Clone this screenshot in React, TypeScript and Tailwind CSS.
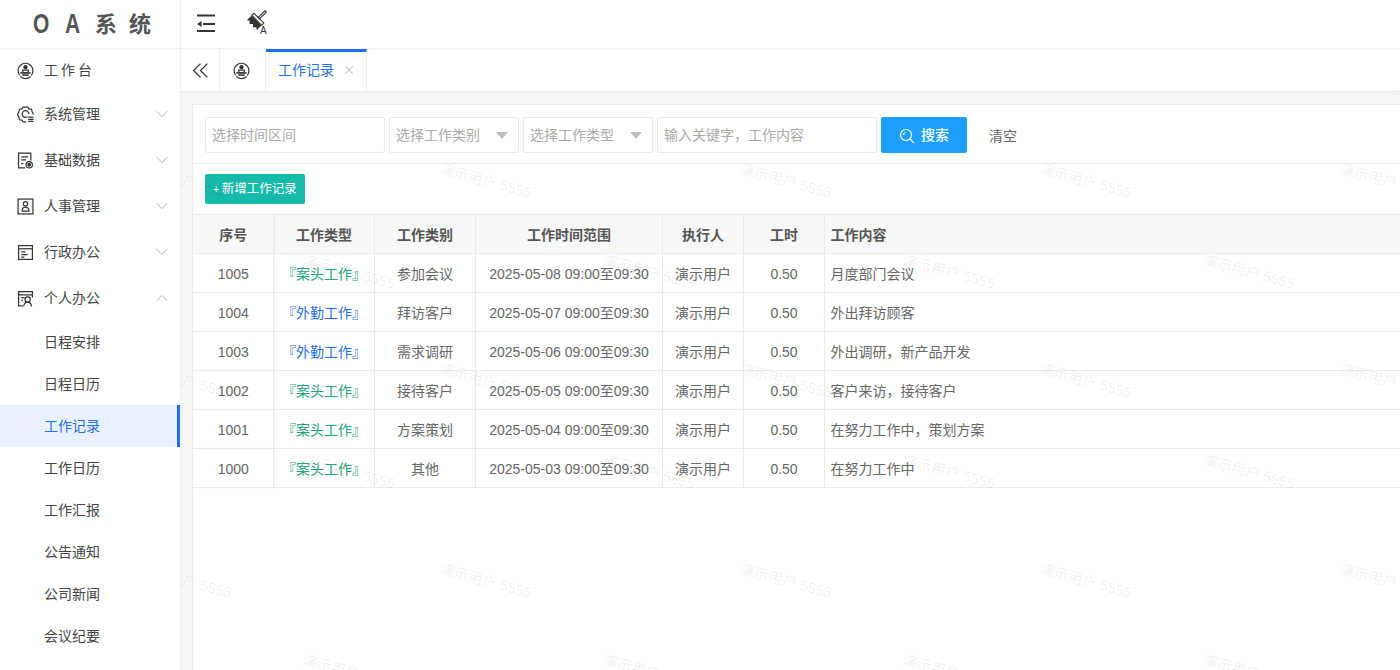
import { ChevronDown, ChevronUp, X } from 'lucide-react'
import type { ReactNode } from 'react'

const font = 'font-["Liberation_Sans","Noto_Sans_CJK_SC",sans-serif]'

// icons are 16x16 line drawings
const Ico = ({ children }: { children: ReactNode }) => (
  <svg viewBox="0 0 16 16" fill="none" stroke="#333" strokeWidth="1.15" className="w-[17px] h-[17px] shrink-0">
    {children}
  </svg>
)

const HomeIcon = () => (
  <Ico>
    <path d="M2.5 12.5A7 7 0 1 1 13.5 12.500" />
    <path d="M3 13.500A7 7 0 0 0 13 13.500" />
    <circle cx="8" cy="4.800" r="1.500" fill="#333" />
    <path d="M4.800 7.600h6.400M5.500 7.600v2.400h5V7.600" strokeWidth="1.200" />
    <path d="M3 10.300h10" strokeWidth="1.300" />
    <path d="M5 12.300h6" strokeWidth="1.500" />
  </Ico>
)

const SystemIcon = () => (
  <Ico>
    <path d="M8.500 15H5.800l-1-1.700-2.500-.3-.5-2.400L.4 8l1.400-2.600.5-2.400 2.500-.3L5.800 1h4.400l1 1.700 2.500.3.500 2.400L15.600 8" />
    <path d="M9.800 10.200A3.200 3.200 0 1 1 11.200 7.500" />
    <path d="M10.500 10.500h5M10.500 12.500h5M10.500 14.500h5" />
  </Ico>
)

const DataIcon = () => (
  <Ico>
    <path d="M7.500 15H1.500V1h11.500v7" />
    <path d="M4 4.500h6.500M4 7.500h4.500M4 11h2" />
    <circle cx="11.500" cy="12" r="3" />
    <circle cx="11.500" cy="12" r="1.200" fill="#333" />
  </Ico>
)

const PersonIcon = () => (
  <Ico>
    <rect x="1" y="1" width="14" height="14" />
    <circle cx="8" cy="5.500" r="2" />
    <path d="M4.800 12.300c0-2.500 1.300-3.800 3.200-3.800s3.200 1.300 3.200 3.800z" />
  </Ico>
)

const OfficeIcon = () => (
  <Ico>
    <rect x="1.500" y="1.500" width="13" height="13" />
    <path d="M1.500 4.500h13" />
    <path d="M4 7.500h4M4 10h6M4 12.300h3" />
  </Ico>
)

const MyIcon = () => (
  <Ico>
    <path d="M5.500 15H1.500V1.500h13V7" />
    <path d="M1.500 4.500h13M4 7.200h3M4 9.700h1.500" />
    <circle cx="10" cy="9" r="2.500" />
    <path d="M6.300 15.500c.3-2.500 1.800-4 3.700-4s3.400 1.500 3.700 4" />
  </Ico>
)

const menus = [
  { label: '系统管理', icon: <SystemIcon /> },
  { label: '基础数据', icon: <DataIcon /> },
  { label: '人事管理', icon: <PersonIcon /> },
  { label: '行政办公', icon: <OfficeIcon /> },
]

const subMenus = ['日程安排', '日程日历', '工作记录', '工作日历', '工作汇报', '公告通知', '公司新闻', '会议纪要']

const rows = [
  { id: 1005, type: '案头工作', cat: '参加会议', time: '2025-05-08 09:00至09:30', content: '月度部门会议' },
  { id: 1004, type: '外勤工作', cat: '拜访客户', time: '2025-05-07 09:00至09:30', content: '外出拜访顾客' },
  { id: 1003, type: '外勤工作', cat: '需求调研', time: '2025-05-06 09:00至09:30', content: '外出调研，新产品开发' },
  { id: 1002, type: '案头工作', cat: '接待客户', time: '2025-05-05 09:00至09:30', content: '客户来访，接待客户' },
  { id: 1001, type: '案头工作', cat: '方案策划', time: '2025-05-04 09:00至09:30', content: '在努力工作中，策划方案' },
  { id: 1000, type: '案头工作', cat: '其他', time: '2025-05-03 09:00至09:30', content: '在努力工作中' },
]

const heads = ['工作类型', '工作类别', '工作时间范围', '执行人', '工时']

// watermark spots, page coordinates
const marks = [
  ...[143, 443, 743, 1043, 1343].flatMap((x) => [159, 359, 559].map((y) => ({ x, y }))),
  ...[306, 606, 906, 1206].flatMap((x) => [250, 450, 650].map((y) => ({ x, y }))),
]

function Sidebar() {
  return (
    <aside className="w-[181px] shrink-0 border-r border-[#f0f0f0] bg-white overflow-hidden text-[14px] text-[#444]">
      <div className="h-[42px] flex items-center pl-[17px] gap-[10px]">
        <HomeIcon />
        <span className="tracking-[3px]">工作台</span>
      </div>
      {menus.map((m) => (
        <div key={m.label} className="h-[46px] flex items-center pl-[17px] pr-[8px] gap-[10px]">
          {m.icon}
          <span className="flex-1">{m.label}</span>
          <ChevronDown className="w-[20px] h-[20px] text-[#98a2b3]" strokeWidth={1} />
        </div>
      ))}
      <div className="h-[46px] flex items-center pl-[17px] pr-[8px] gap-[10px]">
        <MyIcon />
        <span className="flex-1">个人办公</span>
        <ChevronUp className="w-[20px] h-[20px] text-[#98a2b3]" strokeWidth={1} />
      </div>
      {subMenus.map((s) => (
        <div
          key={s}
          className={
            s === '工作记录'
              ? 'h-[42px] flex items-center pl-[44px] bg-[#e8f1fd] text-[#1f6fe5] border-r-[3px] border-[#1f6fe5]'
              : 'h-[42px] flex items-center pl-[44px]'
          }
        >
          {s}
        </div>
      ))}
    </aside>
  )
}

function TabBar() {
  return (
    <div className="h-[43px] shrink-0 flex bg-white border-b border-[#e8e8e8] shadow-[0_1px_3px_rgba(0,0,0,0.06)] relative">
      <div className="w-[39px] flex items-center justify-center border-r border-[#f0f0f0]">
        <svg viewBox="0 0 16 16" fill="none" stroke="#333" strokeWidth="1.2" className="w-[17px] h-[17px]">
          <path d="M8 1.500L1.500 8 8 14.500M14.500 1.500L8 8l6.500 6.500" />
        </svg>
      </div>
      <div className="w-[46px] flex items-center justify-center border-r border-[#f0f0f0] pr-[2px]">
        <HomeIcon />
      </div>
      <div className="w-[101px] border-t-[3px] border-t-[#1f6fe5] border-r border-r-[#f0f0f0] flex items-center pl-[12px] gap-[8px] text-[14px] text-[#1f6fe5] pb-[3px]">
        工作记录
        <X className="w-[14px] h-[14px] text-[#bbb]" strokeWidth={1.8} />
      </div>
    </div>
  )
}

function Caret() {
  return <span className="w-0 h-0 border-x-[6px] border-x-transparent border-t-[7px] border-t-[#bdbdbd]" />
}

function Filters() {
  const box = 'h-[36px] bg-white border border-[#ebebeb] rounded-[2px] flex items-center px-[6px] text-[14px] text-[#aaa]'
  return (
    <div className="h-[59px] flex items-center pl-[12px] pt-[2px] gap-[4px] border-b border-[#ebebeb]">
      <div className={`${box} w-[180px]`}>选择时间区间</div>
      <div className={`${box} w-[130px] justify-between pr-[10px]`}>
        选择工作类别
        <Caret />
      </div>
      <div className={`${box} w-[130px] justify-between pr-[10px]`}>
        选择工作类型
        <Caret />
      </div>
      <div className={`${box} w-[220px]`}>输入关键字，工作内容</div>
      <button className="w-[86px] h-[36px] bg-[#1e9fff] rounded-[2px] text-white text-[14px] font-medium pt-[1px] flex items-center justify-center gap-[6px]">
        <svg viewBox="0 0 16 16" fill="none" stroke="#fff" strokeWidth="1.2" className="w-[16px] h-[16px]">
          <circle cx="7" cy="7" r="5.500" />
          <path d="M4.500 7a2.500 2.500 0 0 1 2-2.500M11 11l4 4" />
        </svg>
        搜索
      </button>
      <span className="ml-[18px] pt-[2px] text-[14px] text-[#666]">清空</span>
    </div>
  )
}

function WorkTable() {
  const th = 'font-bold text-[14px] text-[#555] border-r border-[#ebebeb] text-center pt-[2px] pl-[1px]'
  const td = 'border-r border-[#ebebeb] text-center pt-[2px] pl-[1px]'
  const fixedShadow = 'shadow-[3px_0_4px_-1px_rgba(0,0,0,0.06)]'
  return (
    <table className="w-full table-fixed border-collapse text-[14px] text-[#666]">
      <colgroup>
        <col className="w-[80px]" />
        <col className="w-[101px]" />
        <col className="w-[101px]" />
        <col className="w-[187px]" />
        <col className="w-[81px]" />
        <col className="w-[81px]" />
        <col />
      </colgroup>
      <thead>
        <tr className="h-[39px] bg-[#f7f7f7] border-y border-[#ebebeb]">
          <th className={`${th} ${fixedShadow}`}>序号</th>
          {heads.map((h) => (
            <th key={h} className={th}>
              {h}
            </th>
          ))}
          <th className="font-bold text-[14px] text-[#555] text-left pl-[6px] pt-[2px]">工作内容</th>
        </tr>
      </thead>
      <tbody>
        {rows.map((r) => (
          <tr key={r.id} className="h-[39px] border-b border-[#ebebeb]">
            <td className={`${td} ${fixedShadow}`}>{r.id}</td>
            <td className={`${td} ${r.type === '案头工作' ? 'text-[#23a47c]' : 'text-[#1f6fe5]'}`}>『{r.type}』</td>
            <td className={td}>{r.cat}</td>
            <td className={td}>{r.time}</td>
            <td className={td}>演示用户</td>
            <td className={td}>0.50</td>
            <td className="text-left pl-[6px] pt-[2px]">{r.content}</td>
          </tr>
        ))}
      </tbody>
    </table>
  )
}

export default function App() {
  return (
    <div className={`${font} w-[1400px] h-[670px] overflow-hidden flex flex-col bg-white`}>
      <header className="h-[49px] shrink-0 flex items-center border-b border-[#f0f0f0] bg-white">
        <div className="w-[181px] h-full border-r border-[#f0f0f0] flex items-center pl-[33px] font-bold text-[#555]">
          <span className="text-[28px] w-[32px] scale-x-75 origin-left">O</span>
          <span className="text-[28px] w-[30px] scale-x-75 origin-left">A</span>
          <span className="text-[22px] w-[34px]">系</span>
          <span className="text-[22px]">统</span>
        </div>
        <svg viewBox="0 0 20 20" fill="none" stroke="#333" strokeWidth="2" className="w-[20px] h-[20px] ml-[15px]">
          <path d="M1 1.500h18M7 10h12M1 17h18" />
          <path d="M5.500 7v6L1 10z" fill="#333" stroke="none" />
        </svg>
        <svg viewBox="0 0 24 24" className="w-[24px] h-[24px] ml-[29px] mt-[4px] overflow-visible">
          <g transform="rotate(45 10 8)">
            <path d="M9 -7h2v9.500h-2z" fill="none" stroke="#333" strokeWidth="1.100" />
            <path d="M3 2.500h14v3H3z" fill="none" stroke="#333" strokeWidth="1.100" />
            <path d="M3 6h14v6.500l-2.300-1.700-2.400 2.500-2.300-2.500-2.300 2.500-2.400-2.500L3 12.500z" fill="#333" />
          </g>
          <text x="15" y="20" fontSize="10" fill="#333">A</text>
        </svg>
      </header>
      <div className="flex-1 flex min-h-0">
        <Sidebar />
        <main className="flex-1 min-w-0 flex flex-col bg-[#f7f7f7] relative overflow-hidden">
          <TabBar />
          <div className="flex-1 ml-[11px] mt-[12px] bg-white border-l border-t border-[#ebebeb]">
            <Filters />
            <div className="h-[50px] flex items-center pl-[12px]">
              <button className="w-[100px] h-[30px] bg-[#16baaa] rounded-[2px] text-white text-[12.5px] pt-[1px]">
                <span className="text-[10px]">+ </span>新增工作记录
              </button>
            </div>
            <WorkTable />
          </div>
          {/* watermark */}
          {marks.map((m) => (
            <span
              key={`${m.x}-${m.y}`}
              className="absolute pointer-events-none text-[14.5px] text-[#000]/[0.07] rotate-[15deg] origin-top-left whitespace-nowrap"
              style={{ left: m.x - 181, top: m.y - 49 }}
            >
              演示用户 5555
            </span>
          ))}
        </main>
      </div>
    </div>
  )
}
